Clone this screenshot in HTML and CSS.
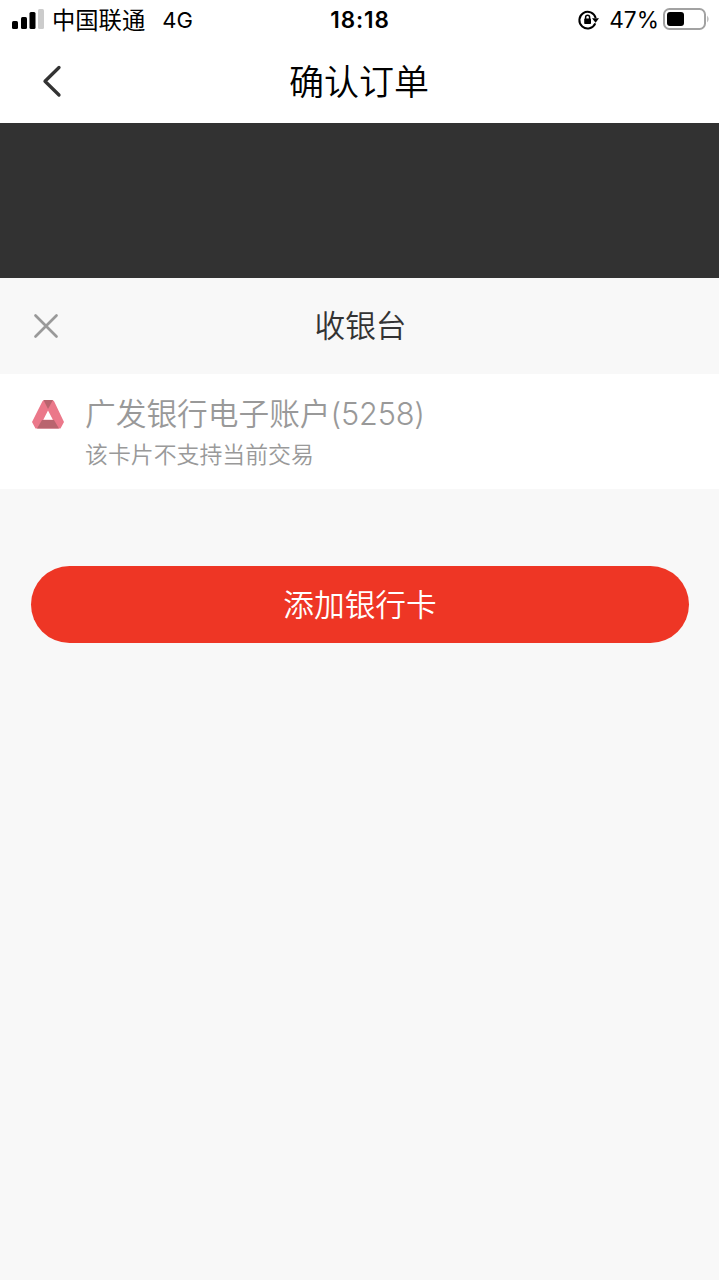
FILE: index.html
```html
<!DOCTYPE html>
<html lang="zh-CN">
<head>
<meta charset="utf-8">
<title>确认订单</title>
<link rel="stylesheet" href="styles.css">
</head>
<body>
<div class="screen">
  <header class="status">
    <div class="status-left">
      <svg class="signal" width="32" height="20" viewBox="0 0 32 20">
        <rect x="0" y="12" width="6" height="8" rx="1.5"/>
        <rect x="9" y="8" width="6" height="12" rx="1.5"/>
        <rect x="17.5" y="3" width="6" height="17" rx="1.5"/>
        <rect class="signal-off" x="26" y="0" width="6" height="20" rx="1.5"/>
      </svg>
      <span class="carrier">中国联通</span>
      <span class="network">4G</span>
    </div>
    <time class="clock">18:18</time>
    <div class="status-right">
      <svg class="lock" width="22" height="20" viewBox="0 0 22 20">
        <path class="lock-ring" d="M17.300 13.400A8.300 8.300 0 1 1 17.700 8"/>
        <path d="M14 8.200h7l-3.400 4.600z"/>
        <rect x="6.200" y="8.600" width="6.800" height="5.400" rx=".8"/>
        <path class="lock-shackle" d="M7.600 9V7.300a2 2 0 0 1 4 0V9"/>
      </svg>
      <span class="percent">47%</span>
      <svg class="battery" width="47" height="22" viewBox="0 0 47 22">
        <rect class="battery-case" x="1" y="1" width="41" height="20" rx="5.500"/>
        <rect x="4" y="4" width="17" height="14" rx="3"/>
        <path class="battery-tip" d="M44.300 7.500q2.400 3.500 0 7z"/>
      </svg>
    </div>
  </header>
  <nav class="navbar">
    <svg class="back" width="20" height="34" viewBox="0 0 20 34"><path d="M17 3.500 3 17.300 17 31"/></svg>
    <h1 class="title">确认订单</h1>
  </nav>
  <div class="mask"></div>
  <main class="sheet">
    <div class="sheet-head">
      <svg class="close" width="26" height="26" viewBox="0 0 26 26"><path d="M2.500 2.500 23.500 23.500M23.500 2.500 2.500 23.500"/></svg>
      <h2 class="sheet-title">收银台</h2>
    </div>
    <section class="card">
      <svg class="bank" width="32" height="29" viewBox="0 0 32 29">
        <path class="bank-red" d="M12.500 0h7.500q1.500 0 2.200 1.500L32 22l-3.500 6.500h-25L0 22 10.300 1.500Q11 0 12.500 0zM16 10.500 11.300 19.700h9.600z" fill-rule="evenodd"/>
        <path class="bank-dark" d="M11.500 0h9.500L16 9z"/>
        <path class="bank-dark" d="M10 20h12l5 8.500H5z"/>
      </svg>
      <div class="card-text">
        <div class="card-name">广发银行电子账户<span class="card-number">(5258)</span></div>
        <div class="card-note">该卡片不支持当前交易</div>
      </div>
    </section>
    <button class="add">添加银行卡</button>
  </main>
</div>
</body>
</html>
```
FILE: styles.css
```css
* { box-sizing: border-box; }
body { margin: 0; background: #fff; font-family: Inter, "Noto Sans CJK SC", sans-serif; color: #000; }
.screen { width: 720px; height: 1280px; display: flex; flex-direction: column; overflow: hidden; }
.status { height: 40px; display: grid; grid-template-columns: 1fr auto 1fr; grid-template-rows: 40px; align-items: center; padding: 0 10px 0 12px; line-height: 38px; }
.status-left, .status-right { display: flex; align-items: center; }
.status-right { justify-content: flex-end; }
.signal { margin: 0 8px 2px 0; }
.signal-off { fill: #ccc; }
.carrier { font-size: 23.300px; padding-top: 2px; }
.network { font-size: 22px; margin-left: 17px; }
.clock { font-size: 22.500px; font-weight: 600; letter-spacing: .9px; margin-right: 2px; }
.lock { margin-right: 9px; overflow: visible; }
.lock-ring { fill: none; stroke: #000; stroke-width: 2; }
.lock-shackle { fill: none; stroke: #000; stroke-width: 1.500px; }
.percent { font-size: 22.700px; margin-right: 4px; }
.battery { margin-bottom: 2px; }
.battery-case { fill: none; stroke: #a2a2a2; stroke-width: 2; }
.battery-tip { fill: #a2a2a2; }
.navbar { height: 83px; display: grid; grid-template-columns: 100px 1fr 100px; align-items: center; }
.back { margin: 0 0 2px 42px; fill: none; stroke: #333; stroke-width: 3.300px; stroke-linecap: round; stroke-linejoin: round; }
.title { margin: 0; padding: 1px 2px 0 0; text-align: center; font-size: 35px; font-weight: 350; line-height: 82px; }
.mask { height: 155px; width: 719px; background: #323232; }
.sheet { flex: 1; width: 719px; background: #f8f8f8; }
.sheet-head { height: 96px; display: grid; grid-template-columns: 100px 1fr 100px; align-items: center; }
.close { margin-left: 33px; fill: none; stroke: #999; stroke-width: 2.700px; stroke-linecap: round; }
.sheet-title { margin: 0; padding-left: 2px; text-align: center; font-size: 30.700px; font-weight: 350; line-height: 96px; color: #333; }
.card { height: 115px; background: #fff; display: flex; padding: 19px 32px; color: #999; }
.bank { margin: 7px 21px 0 0; }
.bank-red { fill: #eb788a; }
.bank-dark { fill: #b9646e; }
.card-name { font-size: 30.700px; line-height: 42px; font-weight: 350; }
.card-number { font-weight: 300; letter-spacing: -.2px; }
.card-note { font-size: 22.900px; line-height: 40px; font-weight: 350; }
.add { display: block; width: 658px; height: 77px; margin: 77px 0 0 31px; padding: 0 0 4px; border: 0; border-radius: 39px; background: #ee3625; color: #fff; font: 350 30.700px/73px "Noto Sans CJK SC", sans-serif; }
```
